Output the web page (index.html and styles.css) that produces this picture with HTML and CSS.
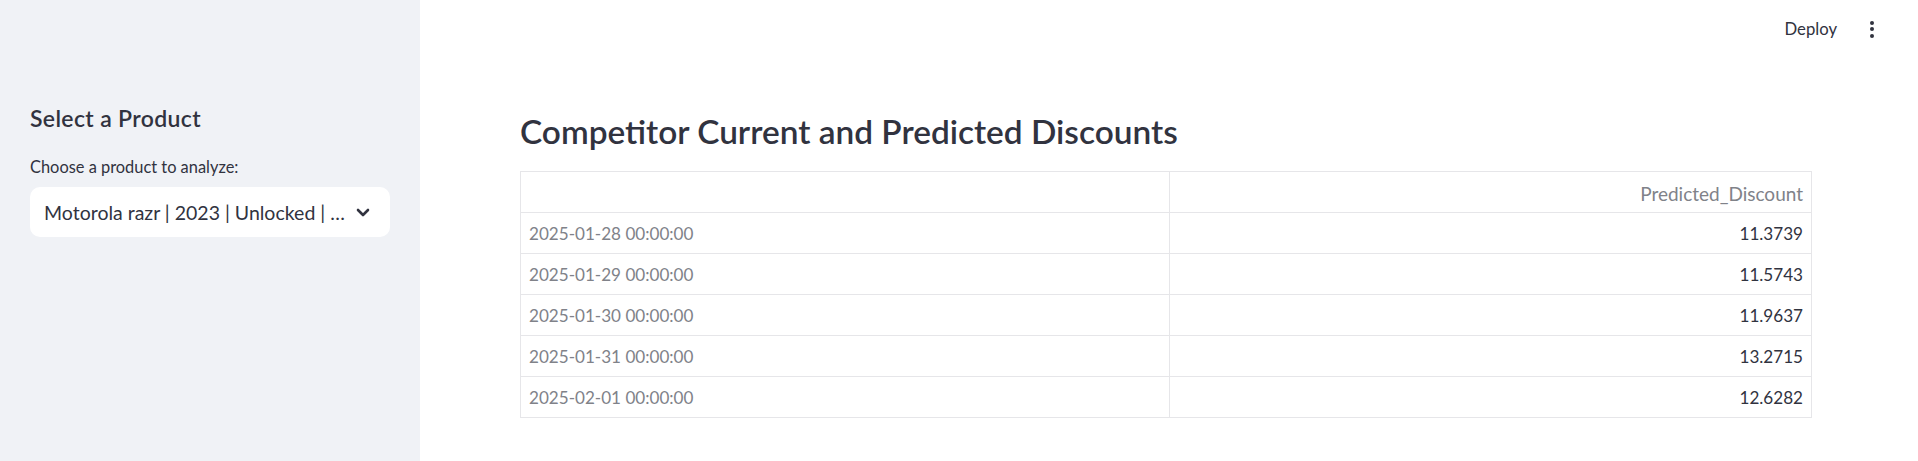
FILE: index.html
```html
<!DOCTYPE html>
<html>
<head>
<meta charset="utf-8">
<link rel="stylesheet" href="styles.css">
</head>
<body>
<div class="app">
  <aside class="sidebar">
    <h3 class="side-title">Select a Product</h3>
    <label class="side-label">Choose a product to analyze:</label>
    <div class="select">
      <span class="select-value">Motorola razr | 2023 | Unlocked | …</span>
      <svg class="chevron" width="14" height="9" viewBox="0 0 14 9"><path d="M2 2 L7 7 L12 2" fill="none" stroke="#31333f" stroke-width="2.6" stroke-linecap="round" stroke-linejoin="round"/></svg>
    </div>
  </aside>
  <main class="main">
    <header class="topbar">
      <span class="deploy">Deploy</span>
      <span class="menu"><i></i><i></i><i></i></span>
    </header>
    <section class="content">
      <h2 class="title">Competitor Current and Predicted Discounts</h2>
      <table class="table">
        <thead>
          <tr><th class="idx"></th><th class="num">Predicted_Discount</th></tr>
        </thead>
        <tbody>
          <tr><th class="idx">2025-01-28 00:00:00</th><td class="num">11.3739</td></tr>
          <tr><th class="idx">2025-01-29 00:00:00</th><td class="num">11.5743</td></tr>
          <tr><th class="idx">2025-01-30 00:00:00</th><td class="num">11.9637</td></tr>
          <tr><th class="idx">2025-01-31 00:00:00</th><td class="num">13.2715</td></tr>
          <tr><th class="idx">2025-02-01 00:00:00</th><td class="num">12.6282</td></tr>
        </tbody>
      </table>
    </section>
  </main>
</div>
</body>
</html>
```
FILE: styles.css
```css
* { box-sizing: border-box; }
html, body { margin: 0; padding: 0; }
body {
  font-family: "Source Sans Pro", "Lato", "Liberation Sans", sans-serif;
  color: #31333f;
  background: #ffffff;
}
.app { display: flex; height: 461px; overflow: hidden; }

.sidebar {
  width: 420px;
  flex: none;
  background: #f0f2f6;
  padding: 103px 30px 0 30px;
}
.side-title {
  margin: 0;
  font-size: 23px;
  font-weight: 600;
  letter-spacing: 0.35px;
  line-height: 30px;
  color: #31333f;
}
.side-label {
  display: block;
  margin-top: 22px;
  font-size: 16.4px;
  line-height: 24px;
  color: #31333f;
}
.select {
  margin-top: 8px;
  height: 50px;
  background: #ffffff;
  border-radius: 10px;
  display: flex;
  align-items: center;
  justify-content: space-between;
  padding: 0 20px 0 14px;
}
.select-value { font-size: 19.5px; color: #31333f; white-space: nowrap; }
.chevron { display: block; }

.main { flex: 1; display: flex; flex-direction: column; min-width: 0; }
.topbar {
  height: 58px;
  display: flex;
  align-items: center;
  justify-content: flex-end;
  padding-right: 44px;
  gap: 33px;
}
.deploy { font-size: 16.7px; color: #31333f; }
.menu { display: flex; flex-direction: column; gap: 2.5px; }
.menu i { display: block; width: 4px; height: 4px; border-radius: 50%; background: #31333f; }

.content { padding: 52px 0 0 100px; }
.title {
  margin: 0 0 19px 0;
  font-size: 33.4px;
  font-weight: 600;
  line-height: 42px;
  color: #31333f;
}
.table {
  width: 1292px;
  border-collapse: collapse;
  font-size: 17.1px;
}
.table th, .table td {
  height: 41px;
  padding: 0 8px;
  border: 1px solid #e6e6e9;
  font-weight: 400;
}
.table th.idx { text-align: left; color: #808289; width: 649px; }
.table thead th.num {
  text-align: right;
  color: #808289;
  font-size: 19px;
  vertical-align: bottom;
  padding-bottom: 7px;
}
.table td.num { text-align: right; color: #31333f; }
```
